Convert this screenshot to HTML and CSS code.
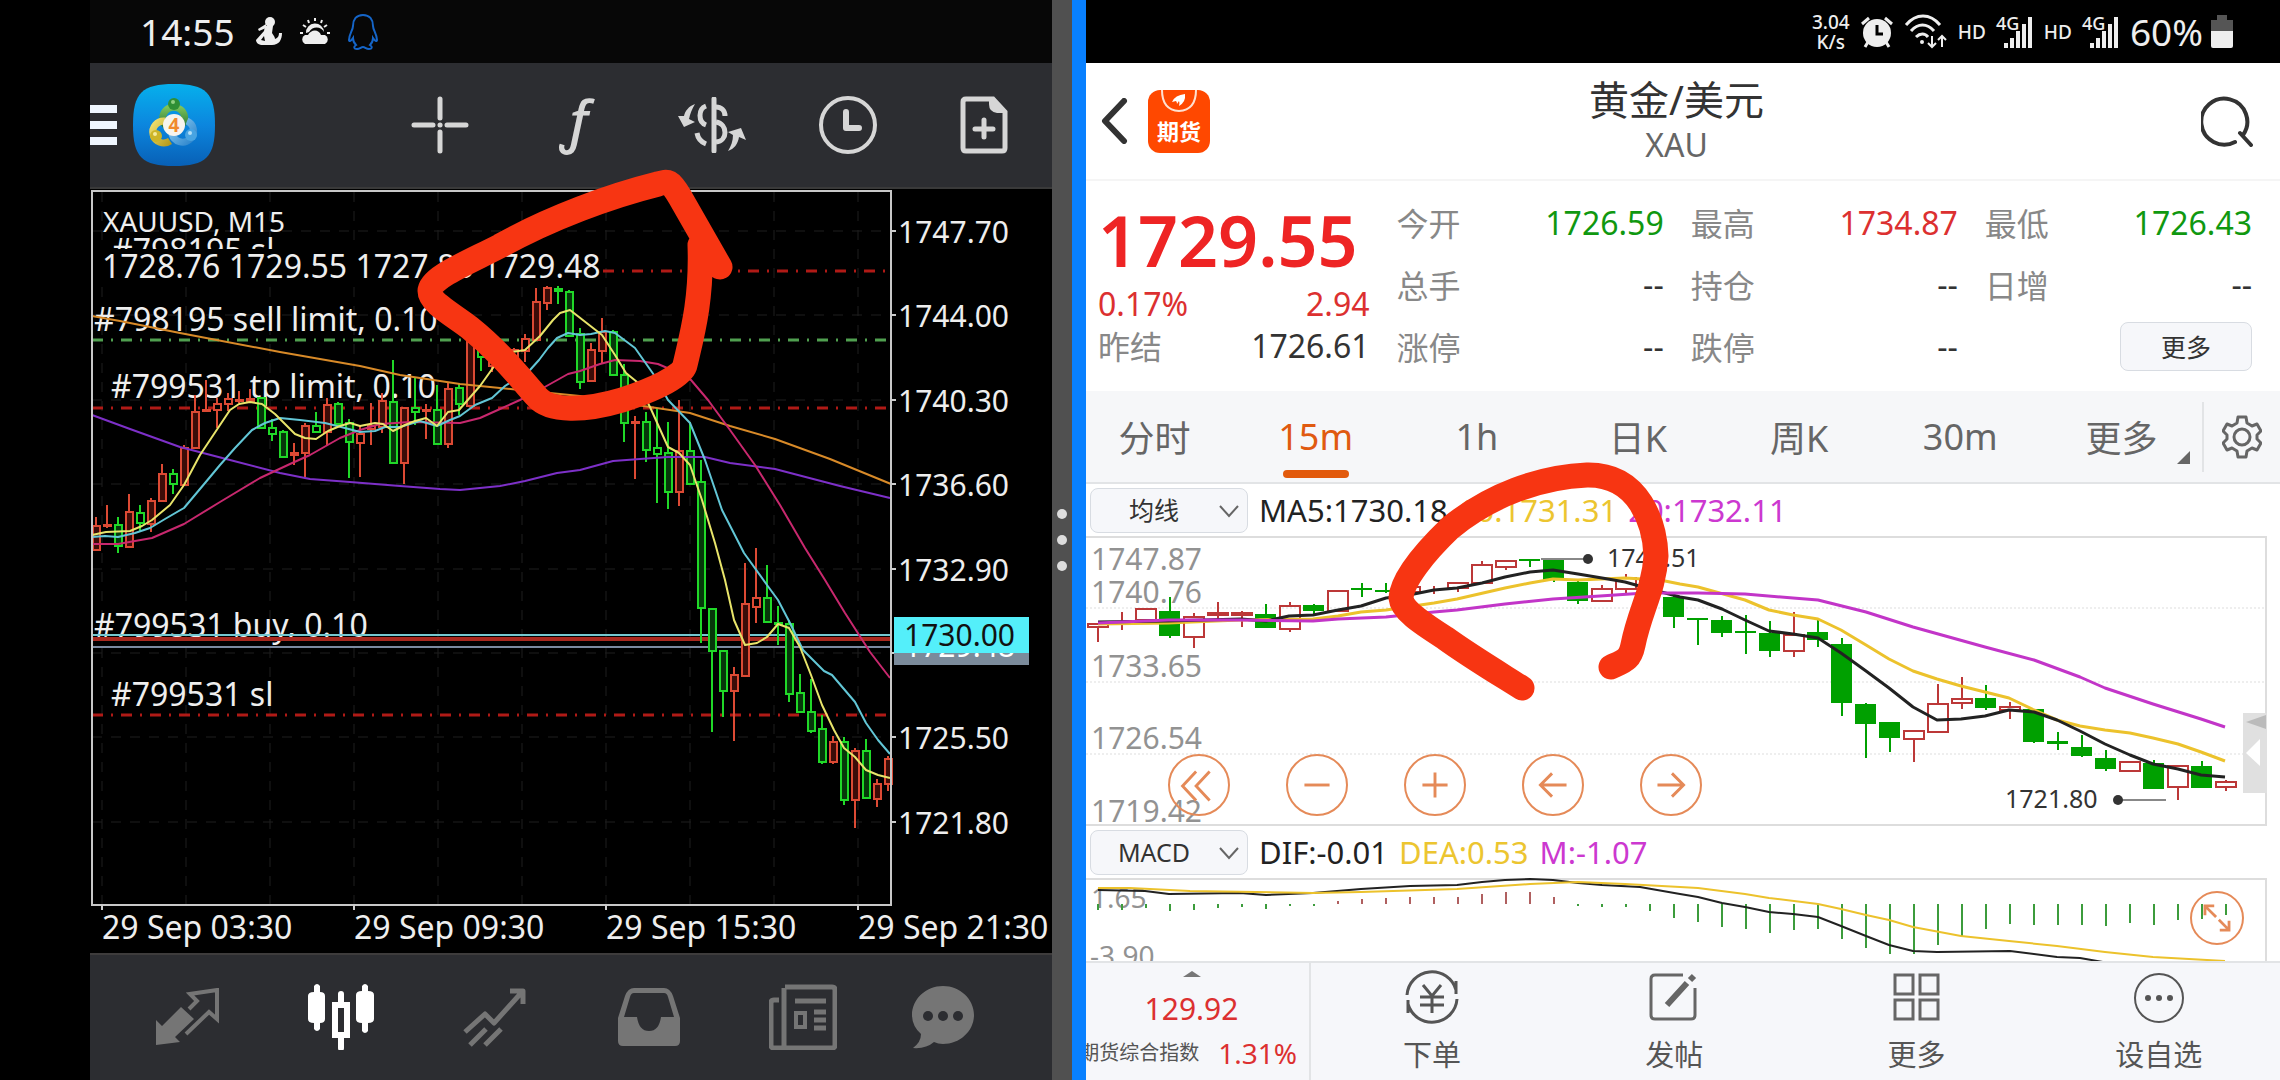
FILE: index.html
```html
<!DOCTYPE html>
<html lang="zh-CN">
<head>
  <meta charset="UTF-8" />
  <meta name="viewport" content="width=device-width, initial-scale=1.0" />
  <title>XAUUSD</title>
  <link rel="stylesheet" href="styles.css">
</head>
<body>
<div class="screen">

  <!-- MetaTrader -->
  <section class="pane mt">
    <div class="status status-left">
      <span class="clock">14:55</span>
      <svg width="28" height="32" viewBox="0 0 28 32" fill="#eee">
        <circle cx="15" cy="6" r="5"/>
        <path d="M11 8l-8 5 1 2 7-3z"/>
        <path d="M10 10h8l-1 7c2 3 3 4 3 6 3-1 4-3 4-6h3c0 7-3 12-10 12H8C4 29 1 27 1 24l8-9zM6 24l4 1-1-5z" fill-rule="evenodd"/>
      </svg>
      <svg width="32" height="32" viewBox="0 0 32 32">
        <path d="M16 2v3M9 4l1 3M23 4l-1 3M4 9l3 2M28 9l-3 2M1 17h3M28 17h3" stroke="#eee" stroke-width="2"/>
        <path d="M7 17a9 9 0 0 1 18-1c-2-5-11-7-15 0z" fill="#eee"/>
        <path d="M6 28a5 5 0 0 1 0-9h3c3-6 11-6 13 0h4a5 5 0 0 1 0 9z" fill="#eee"/>
      </svg>
      <svg width="32" height="36" viewBox="0 0 32 36" fill="none" stroke="#1565c8" stroke-width="2">
        <path d="M16 1C9 1 6 6 6 12c0 4-4 8-4 14 0 2 2 1 4-2 0 3 1 5 3 7-3 2-2 4 1 4 3 0 4-2 6-2s3 2 6 2c3 0 4-2 1-4 2-2 3-4 3-7 2 3 4 4 4 2 0-6-4-10-4-14 0-6-3-11-10-11z"/>
      </svg>
    </div>

    <header class="mt-bar">
      <button class="icon-btn menu-btn" aria-label="Menu">
        <svg width="27" height="40" viewBox="0 0 27 40" fill="#f0f7ff"><path d="M0 0h27v8H0zM0 16h27v8H0zM0 32h27v8H0z"/></svg>
      </button>
      <svg class="mt-logo" width="82" height="82" viewBox="0 0 82 82">
        <defs>
          <linearGradient id="sky" x1="0" y1="0" x2="0" y2="1"><stop offset="0" stop-color="#06b0ec"/><stop offset=".5" stop-color="#0c86de"/><stop offset="1" stop-color="#0860b6"/></linearGradient>
          <linearGradient id="leaf" x1="0" y1="0" x2="0" y2="1"><stop offset="0" stop-color="#7cc35a"/><stop offset="1" stop-color="#2c7c3a"/></linearGradient>
          <linearGradient id="gold" x1="0" y1="0" x2="1" y2="1"><stop offset="0" stop-color="#f0e070"/><stop offset="1" stop-color="#b89c1c"/></linearGradient>
          <linearGradient id="ice" x1="0" y1="0" x2="1" y2="1"><stop offset="0" stop-color="#8ccdf2"/><stop offset="1" stop-color="#2c84cc"/></linearGradient>
        </defs>
        <path d="M41 0c32 0 41 9 41 41s-9 41-41 41S0 73 0 41 9 0 41 0z" fill="url(#sky)"/>
        <path d="M33 42a11 11 0 1 1 17-2" fill="none" stroke="url(#leaf)" stroke-width="7"/>
        <path d="M32 37a11 11 0 1 0 5 20" fill="none" stroke="url(#gold)" stroke-width="7"/>
        <path d="M39 50a11 11 0 1 0 15-13" fill="none" stroke="url(#ice)" stroke-width="7"/>
        <circle cx="41" cy="20" r="6" fill="#2f8f35"/><circle cx="23" cy="52" r="6" fill="#cdb528"/><circle cx="58" cy="51" r="6" fill="#48a4e2"/>
        <circle cx="40" cy="18" r="2" fill="#8fd080"/><circle cx="22" cy="50" r="2" fill="#f4ea9c"/><circle cx="57" cy="49" r="2" fill="#b4e0f8"/>
        <circle cx="41" cy="41" r="11" fill="#f7f4ee"/>
        <text x="41" y="48" text-anchor="middle" class="logo-four">4</text>
      </svg>
      <nav class="mt-tools">
        <button class="icon-btn" aria-label="Crosshair">
          <svg width="58" height="58" viewBox="0 0 58 58" stroke="#d6d6d6" stroke-width="5" stroke-linecap="round"><path d="M29 3v19M29 36v19M3 29h19M36 29h19M29 29h.1"/></svg>
        </button>
        <button class="icon-btn fx" aria-label="Indicators">ƒ</button>
        <button class="icon-btn" aria-label="Trade">
          <svg width="70" height="56" viewBox="0 0 70 56" fill="none" stroke="#d6d6d6" stroke-width="5">
            <path d="M37 2v52" stroke-linecap="round"/>
            <path d="M39 10c5 0 9 3 9 9M39 25c12 2 12 19 0 20M29 9c-8 3-8 16 0 19M20 36c1 6 4 9 9 11"/>
            <path d="M18 7C12 9 8 14 7 19l-6 0 6 11 11-5-6-3c1-5 3-10 6-15zM51 54c6-2 10-7 11-14l7 3-5-12-13 4 5 3c0 6-2 11-5 16z" fill="#d6d6d6" stroke="none"/>
          </svg>
        </button>
        <button class="icon-btn" aria-label="Timeframe">
          <svg width="60" height="60" viewBox="0 0 60 60" fill="none" stroke="#d6d6d6" stroke-width="4"><circle cx="30" cy="30" r="27"/><path d="M28 17v16h13" stroke-width="6" stroke-linecap="round" stroke-linejoin="round"/></svg>
        </button>
        <button class="icon-btn" aria-label="New order">
          <svg width="48" height="58" viewBox="0 0 48 58" fill="none" stroke="#d6d6d6" stroke-width="5">
            <path d="M6 3h27l12 13v36q0 3-3 3H6q-3 0-3-3V6q0-3 3-3z"/><path d="M29 3h4l13 14h-9q-8-1-8-9z" fill="#d6d6d6" stroke="none"/><path d="M24 24v17M15 33h18" stroke-linecap="round"/>
          </svg>
        </button>
      </nav>
    </header>

    <svg class="mt-chart" viewBox="90 189 962 764">
      <g id="mtGrid" class="mt-grid"></g>
      <g class="orders">
        <path class="o-red" d="M603 271H891M92 408H891M92 715H891"/>
        <path class="o-green" d="M92 340H891"/>
      </g>
      <g class="mt-text">
        <text x="112" y="262">#798195 sl</text>
        <rect x="93" y="249" width="507" height="33" fill="#000"/>
        <text x="103" y="232" class="t-symbol">XAUUSD, M15</text>
        <text x="102" y="278">1728.76 1729.55 1727.83 1729.48</text>
        <text x="94" y="331">#798195 sell limit, 0.10</text>
        <text x="111" y="398">#799531 tp limit, 0.10</text>
        <text x="94" y="637">#799531 buy, 0.10</text>
        <text x="111" y="706">#799531 sl</text>
      </g>
      <path d="M92 639H891" stroke="#a8281e" stroke-width="4"/>
      <path d="M92 635H891" stroke="#74c8d0" stroke-width="2"/>
      <path d="M92 647H891" stroke="#7c8aa0" stroke-width="2"/>
      <g id="mtCandles"></g>
      <g id="mtLines" class="lines"></g>
      <path d="M92 191H891V905H92Z" fill="none" stroke="#c8c8c8" stroke-width="2"/>
      <g id="mtAxis" class="mt-axis"></g>
      <rect x="894" y="617" width="135" height="48" fill="#7b8b9b"/>
      <text x="904" y="657" class="t-bid">1729.48</text>
      <rect x="894" y="617" width="135" height="36" fill="#54effa"/>
      <text x="904" y="646" class="t-ask">1730.00</text>
    </svg>

    <nav class="mt-nav">
      <button class="icon-btn" aria-label="Quotes">
        <svg width="64" height="58" viewBox="0 0 64 58"><path d="M1 57V32l6 6 19-19 13 12-19 18 5 5z" fill="#757575"/><path d="M34 21l8-8-7-7 27-4v29l-8-7-23 22" fill="none" stroke="#757575" stroke-width="4"/></svg>
      </button>
      <button class="icon-btn" aria-label="Chart">
        <svg width="68" height="66" viewBox="0 0 68 66" fill="#fff"><path d="M7 2q3-4 6 0v6q5 0 5 4v23q0 4-5 4v6q-3 4-6 0v-6q-6 0-6-4V12q0-4 6-4zM55 2q3-4 6 0v5q6 0 6 4v24q0 4-6 4v8q-3 4-6 0v-8q-6 0-6-4V11q0-4 6-4z"/><path d="M28 21h12v30H28zM34 10v11M34 51v13" fill="none" stroke="#fff" stroke-width="6" stroke-linecap="round"/></svg>
      </button>
      <button class="icon-btn" aria-label="Trade">
        <svg width="64" height="60" viewBox="0 0 64 60" fill="none" stroke="#757575" stroke-width="5"><path d="M2 45l20-18 9 9L59 5M47 4h13v13M7 58l16-16M22 58l16-16" stroke-linejoin="round"/></svg>
      </button>
      <button class="icon-btn" aria-label="History">
        <svg width="64" height="60" viewBox="0 0 64 60"><path d="M17 1h30q6 0 9 8l7 22v23q0 5-5 5H6q-5 0-5-5V31L8 9q3-8 9-8zm0 5q-3 0-4 4L7 30h13q2 14 12 14t12-14h13L51 10q-1-4-4-4z" fill="#757575" fill-rule="evenodd"/></svg>
      </button>
      <button class="icon-btn" aria-label="News">
        <svg width="68" height="66" viewBox="0 0 68 66" fill="none" stroke="#757575" stroke-width="5"><path d="M16 3h47q3 0 3 3v55q0 3-3 3H5q-3 0-3-3V19q0-3 3-3h5M15 4v60"/><path d="M26 17h31M45 28h12M45 36h12M45 44h12"/><path d="M27 29h9v14h-9z" stroke-width="4"/></svg>
      </button>
      <button class="icon-btn" aria-label="Messages">
        <svg width="64" height="64" viewBox="0 0 64 64"><path d="M32 1c17 0 31 13 31 29S49 59 32 59q-5 0-9-2-8 7-21 6 8-6 8-14-9-8-9-19C1 14 15 1 32 1z" fill="#757575"/><g fill="#2c2d31"><circle cx="17" cy="31" r="5"/><circle cx="32" cy="31" r="5"/><circle cx="47" cy="31" r="5"/></g></svg>
      </button>
    </nav>
  </section>

  <div class="splitter"><i></i><i></i><i></i></div>

  <!-- Futures app -->
  <section class="pane fut">
    <div class="status status-right">
      <span class="speed">3.04<br>K/s</span>
      <svg width="34" height="34" viewBox="0 0 34 34"><g fill="none" stroke="#eee" stroke-width="3"><path d="M2 9l7-6M32 9l-7-6M8 27l-3 5M26 27l3 5"/></g><circle cx="17" cy="18" r="14" fill="#eee"/><path d="M17 10v9h6" fill="none" stroke="#000" stroke-width="3"/></svg>
      <svg width="44" height="36" viewBox="0 0 44 36" fill="none" stroke="#eee" stroke-width="3"><path d="M2 11C12-1 26-1 36 11M7 17c7-8 16-8 23 0M12 23c4-4 9-4 12 0"/><circle cx="18" cy="28" r="2" fill="#eee" stroke="none"/><path d="M28 22v11M24 29l4 4 4-4M38 33V22M34 26l4-4 4 4" stroke-width="2"/></svg>
      <span class="hd">HD</span>
      <svg class="signal" width="38" height="34" viewBox="0 0 38 34"><text x="0" y="15" class="net">4G</text><path d="M10 33v-5M16 33v-10M22 33V16M28 33V9M34 33V2" stroke="#eee" stroke-width="4"/></svg>
      <span class="hd">HD</span>
      <svg class="signal" width="38" height="34" viewBox="0 0 38 34"><text x="0" y="15" class="net">4G</text><path d="M10 33v-5M16 33v-10M22 33V16M28 33V9M34 33V2" stroke="#eee" stroke-width="4"/></svg>
      <span class="battery-text">60%</span>
      <svg class="battery" width="22" height="33" viewBox="0 0 22 33"><path d="M6 0h10v5h6v12H0V5h6z" fill="#555"/><path d="M0 16h22v15q0 2-2 2H2q-2 0-2-2z" fill="#eee"/></svg>
    </div>

    <header class="fut-head">
      <div class="head-left">
        <button class="icon-btn" aria-label="返回">
          <svg width="28" height="46" viewBox="0 0 28 46" fill="none" stroke="#333" stroke-width="6" stroke-linecap="round" stroke-linejoin="round"><path d="M24 3L5 23l19 20"/></svg>
        </button>
        <svg width="62" height="63" viewBox="0 0 62 63">
          <rect width="62" height="63" rx="12" fill="#ff4800"/>
          <path d="M14 0q0 20 17 21Q48 20 48 0" fill="none" stroke="#ffe0d0" stroke-width="2"/>
          <path d="M24 12q3-7 13-8 1 8-6 12 1-3 0-5l-2 3q0-2-1-3z" fill="#fff"/>
          <text x="31" y="50" text-anchor="middle" class="app-name">期货</text>
        </svg>
      </div>
      <div class="head-title">
        <h1>黄金/美元</h1>
        <p>XAU</p>
      </div>
      <button class="icon-btn head-search" aria-label="搜索">
        <svg width="52" height="52" viewBox="0 0 52 52" fill="none" stroke="#333" stroke-width="4" stroke-linecap="round"><path d="M34 47A23 23 0 1 1 42 40M39 38l11 12"/></svg>
      </button>
    </header>

    <div class="quote">
      <div class="quote-main">
        <div class="price">1729.55</div>
        <div class="pair change up"><span>0.17%</span><span>2.94</span></div>
        <div class="pair prev"><label>昨结</label><span>1726.61</span></div>
      </div>
      <div class="quote-col">
        <div class="pair"><label>今开</label><span class="down">1726.59</span></div>
        <div class="pair"><label>总手</label><span>--</span></div>
        <div class="pair"><label>涨停</label><span>--</span></div>
      </div>
      <div class="quote-col">
        <div class="pair"><label>最高</label><span class="up">1734.87</span></div>
        <div class="pair"><label>持仓</label><span>--</span></div>
        <div class="pair"><label>跌停</label><span>--</span></div>
      </div>
      <div class="quote-col">
        <div class="pair"><label>最低</label><span class="down">1726.43</span></div>
        <div class="pair"><label>日增</label><span>--</span></div>
        <div class="pair pair-end"><button class="more-btn">更多</button></div>
      </div>
    </div>

    <div class="tabs">
      <button class="tab">分时</button>
      <button class="tab active">15m</button>
      <button class="tab">1h</button>
      <button class="tab">日K</button>
      <button class="tab">周K</button>
      <button class="tab">30m</button>
      <button class="tab tab-more">更多</button>
      <button class="icon-btn gear" aria-label="设置">
        <svg width="40" height="44" viewBox="0 0 40 44" fill="none" stroke="#666" stroke-width="3" stroke-linejoin="round"><path d="M16 2h8l1 6 5 3 5-2 4 7-4 4v4l4 4-4 7-5-2-5 3-1 6h-8l-1-6-5-3-5 2-4-7 4-4v-4l-4-4 4-7 5 2 5-3z"/><circle cx="20" cy="22" r="8"/></svg>
      </button>
    </div>

    <div class="indicator">
      <span class="pick">
        <select aria-label="主图指标"><option>均线</option><option>BOLL</option></select>
        <svg width="22" height="14" viewBox="0 0 22 14" fill="none" stroke="#666" stroke-width="2"><path d="M2 2l9 10 9-10"/></svg>
      </span>
      <span class="v1">MA5:1730.18</span>
      <span class="v2">10:1731.31</span>
      <span class="v3">20:1732.11</span>
    </div>

    <div class="kline">
      <svg viewBox="1086 536 1194 290">
        <path d="M1086 608H2265M1086 682H2265M1086 754H2265" stroke="#ddd" stroke-width="1" stroke-dasharray="2 2"/>
        <path d="M1080 537H2266V825H1080" fill="none" stroke="#ddd" stroke-width="2"/>
        <g class="scale">
          <text x="1091" y="570">1747.87</text>
          <text x="1091" y="603">1740.76</text>
          <text x="1091" y="677">1733.65</text>
          <text x="1091" y="749">1726.54</text>
          <text x="1091" y="822">1719.42</text>
        </g>
        <g id="futCandles"></g>
        <g id="futLines" class="lines bold"></g>
        <g class="marks">
          <path d="M1541 559H1588M2118 800H2166" stroke="#888" stroke-width="2"/>
          <circle cx="1588" cy="559" r="5"/><circle cx="2118" cy="800" r="5"/>
          <text x="1607" y="567">1747.51</text>
          <text x="2005" y="808">1721.80</text>
        </g>
        <path d="M2243 713h24v80h-24z" fill="#e0e0e0"/>
        <path d="M2266 715v14l-20-7z" fill="#bbb"/>
        <path d="M2260 739v27l-14-13z" fill="#fff"/>
      </svg>
      <div class="zoom-btns">
        <button aria-label="最早"><svg viewBox="0 0 60 60"><path d="M27 16L13 31l14 15M41 16L27 31l14 15"/></svg></button>
        <button aria-label="缩小"><svg viewBox="0 0 60 60"><path d="M17 30h26"/></svg></button>
        <button aria-label="放大"><svg viewBox="0 0 60 60"><path d="M17 30h26M30 17v26"/></svg></button>
        <button aria-label="左移"><svg viewBox="0 0 60 60"><path d="M44 30H17M29 18L17 30l12 12"/></svg></button>
        <button aria-label="右移"><svg viewBox="0 0 60 60"><path d="M16 30h27M31 18l12 12-12 12"/></svg></button>
      </div>
    </div>

    <div class="indicator">
      <span class="pick">
        <select aria-label="副图指标"><option>MACD</option><option>KDJ</option></select>
        <svg width="22" height="14" viewBox="0 0 22 14" fill="none" stroke="#666" stroke-width="2"><path d="M2 2l9 10 9-10"/></svg>
      </span>
      <span class="v1">DIF:-0.01</span>
      <span class="v2">DEA:0.53</span>
      <span class="v3">M:-1.07</span>
    </div>

    <div class="macd">
      <svg viewBox="1086 879 1194 83">
        <path d="M1080 880H2266V970" fill="none" stroke="#ddd" stroke-width="2"/>
        <g class="scale small">
          <text x="1091" y="909">1.65</text>
          <text x="1090" y="967">-3.90</text>
        </g>
        <g id="macdBars"></g>
        <g id="macdLines" class="lines"></g>
      </svg>
      <button class="expand" aria-label="全屏"><svg viewBox="0 0 54 54"><path d="M14 24V14h10M15 15l11 11M40 30v10H30M39 39L29 29"/></svg></button>
    </div>

    <nav class="fut-nav">
      <a class="index" href="#">
        <i class="caret"></i>
        <strong>129.92</strong>
        <span class="index-row"><span>期货综合指数</span><b>1.31%</b></span>
      </a>
      <a class="nav-item" href="#">
        <svg width="54" height="54" viewBox="0 0 54 54" fill="none" stroke="#555" stroke-width="3"><path d="M2 25A25 25 0 0 1 51 20M52 29A25 25 0 0 1 3 34M51 11v13M3 43V30"/><path d="M18 15l9 11 9-11M15 27h24M15 35h24M27 26v17"/></svg>
        下单
      </a>
      <a class="nav-item" href="#">
        <svg width="54" height="54" viewBox="0 0 54 54" fill="none" stroke="#666" stroke-width="3"><path d="M36 5H8Q4 5 4 9v36q0 4 4 4h36q4 0 4-4V18"/><path d="M20 35l20-22M43 10l4-4" stroke-width="6"/></svg>
        发帖
      </a>
      <a class="nav-item" href="#">
        <svg width="54" height="54" viewBox="0 0 54 54" fill="none" stroke="#666" stroke-width="3"><path d="M5 5h18v19H5zM30 5h18v19H30zM5 30h18v19H5zM30 30h18v19H30z"/></svg>
        更多
      </a>
      <a class="nav-item" href="#">
        <svg width="54" height="54" viewBox="0 0 54 54" fill="none" stroke="#555" stroke-width="2"><circle cx="27" cy="28" r="24"/><g fill="#555" stroke="none"><circle cx="16" cy="28" r="3"/><circle cx="27" cy="28" r="3"/><circle cx="38" cy="28" r="3"/></g></svg>
        设自选
      </a>
    </nav>
  </section>

  <!-- Pen marks over both panes -->
  <svg class="pen" viewBox="0 0 2280 1080">
    <path d="M720 267L680 197C670 180 668 181 658 184C610 196 550 218 500 246C465 264 430 278 430 291C430 303 455 316 470 328C500 352 520 378 537 397C550 412 585 411 622 400C650 391 683 377 685 365C692 335 702 300 700 245"/>
    <path d="M1522 688C1495 671 1470 656 1445 638C1420 622 1402 610 1401 598C1402 580 1425 552 1450 528C1490 495 1540 477 1587 475C1640 474 1655 525 1656 556C1654 590 1640 610 1633 645C1630 660 1624 661 1611 667"/>
  </svg>
</div>
<script src="script.js"></script>
</body>
</html>
```
FILE: styles.css
```css
* {
  box-sizing: border-box;
}

body {
  margin: 0;
  background: #000;
  font-family: "Noto Sans", "Noto Sans CJK SC", sans-serif;
}

button {
  font-family: inherit;
  border: none;
  background: none;
  padding: 0;
  cursor: pointer;
}

h1, p {
  margin: 0;
  font-weight: 400;
}

svg {
  display: block;
}

.screen {
  position: relative;
  display: flex;
  min-height: 100vh;
  padding-left: 90px;
  overflow: hidden;
}

.pane {
  display: flex;
  flex-direction: column;
  min-width: 0;
}

.mt {
  flex: 962 1 0;
  color: #eee;
  background: #000;
}

.fut {
  flex: 1194 1 0;
  color: #333;
  background: #fff;
  overflow: hidden;
}

.icon-btn {
  display: flex;
  align-items: center;
  justify-content: center;
}

/* status bars */
.status {
  display: flex;
  align-items: center;
  height: 63px;
  color: #eee;
}

.status-left {
  gap: 16px;
  padding-left: 50px;
  background: #070707;
}

.clock {
  margin-right: 4px;
  font-size: 37px;
}

.status-right {
  justify-content: flex-end;
  gap: 10px;
  padding-right: 47px;
  background: #000;
}

.speed {
  font-size: 19px;
  font-weight: 500;
  line-height: 20px;
  text-align: center;
}

.hd {
  font-size: 19px;
  font-weight: 500;
}

.signal {
  overflow: visible;
}

.net {
  font-size: 18px;
  font-weight: 500;
  fill: #eee;
}

.battery-text {
  font-size: 37px;
}

.battery {
  margin-left: -2px;
}

/* MetaTrader toolbar */
.mt-bar {
  display: flex;
  align-items: center;
  height: 126px;
  background: #2c2d31;
  border-bottom: 2px solid #3a3a3a;
}

.mt-logo {
  margin-left: 16px;
}

.logo-four {
  font-size: 19px;
  font-weight: 700;
  fill: #f08a2c;
}

.mt-tools {
  flex: 1;
  display: grid;
  grid-template-columns: repeat(5, 1fr);
  margin-left: 157px;
}

.fx {
  padding-bottom: 12px;
  color: #d6d6d6;
  font-size: 56px;
  line-height: 48px;
  font-style: italic;
  font-weight: 500;
}

.mt-chart {
  width: 100%;
  height: auto;
}

.mt-grid path {
  stroke: #1e1e1e;
  stroke-width: 1;
  stroke-dasharray: 10 9;
}

.orders path {
  stroke-width: 3;
  stroke-dasharray: 11 8 2 8;
}

.o-red {
  stroke: #b01a16;
}

.o-green {
  stroke: #50a050;
}

.mt-text text {
  font-size: 32px;
  fill: #eee;
}

.mt-text .t-symbol {
  font-size: 28px;
}

.mt-axis text {
  font-size: 30px;
  fill: #eee;
}

.mt-axis .t-time {
  font-size: 32px;
}

.t-ask,
.t-bid {
  font-size: 30px;
  fill: #111;
}

.t-bid {
  fill: #fff;
}

.lines path {
  fill: none;
  stroke-width: 2;
  stroke-linejoin: round;
}

.lines.bold path {
  stroke-width: 3;
}

.mt-nav {
  flex: 1;
  display: grid;
  grid-template-columns: repeat(5, 11fr) 9fr;
  align-items: center;
  padding: 0 46px 8px 20px;
  background: #2c2d31;
  border-top: 2px solid #3e3c3c;
}

/* divider between the two apps */
.splitter {
  display: flex;
  flex-direction: column;
  align-items: center;
  justify-content: center;
  gap: 16px;
  width: 34px;
  padding-bottom: 6px;
  background: #505050;
  border-right: 14px solid #0880ff;
}

.splitter i {
  width: 10px;
  height: 10px;
  border-radius: 50%;
  background: #ddd;
}

/* futures header */
.fut-head {
  display: grid;
  grid-template-columns: 1fr auto 1fr;
  align-items: center;
  height: 118px;
  padding: 0 27px 0 14px;
  border-bottom: 2px solid #f5f5f5;
}

.head-left {
  display: flex;
  align-items: center;
  gap: 20px;
}

.head-title {
  text-align: center;
}

.head-title h1 {
  font-size: 40px;
  line-height: 48px;
}

.head-title p {
  color: #666;
  font-size: 32px;
  line-height: 42px;
}

.head-search {
  justify-self: end;
}

.app-name {
  font-size: 22px;
  font-weight: 700;
  fill: #fff;
}

/* quote table */
.quote {
  display: grid;
  grid-template-columns: repeat(4, 1fr);
  column-gap: 27px;
  padding: 10px 28px 14px 12px;
  font-size: 32px;
}

.pair {
  display: flex;
  justify-content: space-between;
  align-items: center;
  height: 62px;
}

.pair label {
  color: #888;
}

.pair-end {
  justify-content: flex-end;
}

.price {
  color: #ee2424;
  font-size: 70px;
  font-weight: 600;
  line-height: 98px;
  padding-right: 12px;
  text-align: center;
}

.change {
  height: 28px;
}

.prev {
  height: 56px;
}

.up {
  color: #dc3030;
}

.down {
  color: #109810;
}

.more-btn {
  width: 132px;
  height: 49px;
  color: #333;
  font-size: 25px;
  background: #f6f7fa;
  border: 1px solid #d8dce2;
  border-radius: 8px;
}

/* period tabs */
.tabs {
  display: flex;
  height: 93px;
  background: #f6f7f9;
  border-bottom: 2px solid #e2e4e6;
}

.tab {
  position: relative;
  flex: 1;
  color: #666;
  font-size: 36px;
}

.tab:first-child {
  margin-left: -12px;
}

.tab.active {
  color: #e05a10;
}

.tab.active::after {
  content: "";
  position: absolute;
  left: 50%;
  bottom: 4px;
  width: 66px;
  height: 8px;
  margin-left: -33px;
  border-radius: 4px;
  background: #e25a0c;
}

.tab-more::after {
  content: "";
  position: absolute;
  right: 12px;
  bottom: 18px;
  border-left: 13px solid transparent;
  border-bottom: 13px solid #666;
}

.gear {
  width: 78px;
  height: 70px;
  margin-top: 11px;
  border-left: 2px solid #e2e4e6;
}

/* indicator rows */
.indicator {
  display: flex;
  align-items: center;
  gap: 11px;
  height: 52px;
  padding-left: 4px;
  font-size: 31px;
}

.pick {
  position: relative;
}

.pick select {
  display: block;
  width: 158px;
  height: 45px;
  padding: 0 30px 0 0;
  color: #333;
  font: 25px "Noto Sans", "Noto Sans CJK SC", sans-serif;
  text-align-last: center;
  background: #f6f7fa;
  border: 1px solid #d8dce2;
  border-radius: 8px;
  appearance: none;
}

.pick svg {
  position: absolute;
  right: 8px;
  top: 16px;
  pointer-events: none;
}

.v1 {
  color: #222;
}

.v2 {
  color: #ecc530;
}

.v3 {
  color: #cc38d0;
}

/* k-line chart */
.kline,
.macd {
  position: relative;
}

.kline > svg,
.macd > svg {
  width: 100%;
  height: auto;
}

.scale text {
  font-size: 30px;
  fill: #929292;
}

.scale.small text {
  font-size: 28px;
}

.marks {
  font-size: 25px;
  fill: #333;
}

.zoom-btns {
  position: absolute;
  left: 82px;
  bottom: 10px;
  display: flex;
  gap: 56px;
}

.zoom-btns button,
.expand {
  width: 62px;
  height: 62px;
  border: 2px solid #e58a58;
  border-radius: 50%;
}

.zoom-btns path,
.expand path {
  fill: none;
  stroke: #e58a58;
  stroke-width: 3;
}

.expand {
  position: absolute;
  right: 36px;
  bottom: 16px;
  width: 54px;
  height: 54px;
}

/* bottom bar */
.fut-nav {
  flex: 1;
  display: flex;
  background: #f6f7fa;
  border-top: 2px solid #e2e4e6;
}

.fut-nav a {
  color: #555;
  text-decoration: none;
}

.index {
  display: flex;
  flex-direction: column;
  align-items: center;
  width: 225px;
  padding: 8px 12px 0 0;
  border-right: 2px solid #e2e4e6;
}

.caret {
  border: 9px solid transparent;
  border-top-width: 0;
  border-bottom: 6px solid #777;
}

.index strong {
  color: #dc3030;
  font-size: 30px;
  font-weight: 400;
  line-height: 42px;
  margin-top: 11px;
}

.index-row {
  align-self: flex-end;
  display: flex;
  align-items: center;
  gap: 19px;
  font-size: 20px;
  line-height: 46px;
  white-space: nowrap;
}

.index b {
  color: #dc3030;
  font-size: 28px;
  font-weight: 400;
}

.nav-item {
  flex: 1;
  display: flex;
  flex-direction: column;
  align-items: center;
  padding-top: 7px;
  font-size: 29px;
  line-height: 62px;
}

.pen {
  position: absolute;
  left: 0;
  top: 0;
  width: 100%;
  pointer-events: none;
}

.pen path {
  fill: none;
  stroke: #f73512;
  stroke-width: 25;
  stroke-linecap: round;
  stroke-linejoin: round;
}
```
FILE: script.js
```js
// candle: [colour, high, low, body top, body bottom]
const mtData = [
  ['r',517,550,526,550],['r',505,528,525,525],['g',517,553,525,546],['r',494,548,512,547],
  ['g',505,532,513,523],['r',498,532,501,524],['r',464,501,474,501],['g',469,494,474,484],
  ['r',445,485,448,485],['r',395,448,412,448],['r',380,412,410,410],['r',398,428,404,410],
  ['r',393,411,399,404],['r',391,403,400,401],['r',389,403,399,401],['g',397,428,398,428],
  ['g',419,441,428,434],['g',430,458,432,457],['r',443,465,453,455],['r',423,477,426,453],
  ['g',412,433,426,432],['r',398,446,405,432],['g',402,426,404,424],['g',419,478,423,442],
  ['r',425,477,434,443],['r',403,445,426,429],['r',393,433,401,427],['g',360,463,402,463],
  ['r',408,484,408,463],['g',377,425,408,412],['r',404,439,410,411],['g',385,445,410,444],
  ['r',382,448,389,444],['g',384,415,388,404],['r',340,407,342,406],['g',340,371,345,357],
  ['r',348,372,352,366],['r',350,375,356,366],['r',348,380,350,362],['r',334,362,339,351],
  ['r',288,341,302,340],['r',286,310,288,303],['g',286,304,289,291],['g',290,337,292,336],
  ['g',328,389,334,382],['r',343,381,350,381],['r',318,363,332,351],['g',330,375,332,375],
  ['g',364,442,375,423],['r',416,479,422,422],['g',412,462,422,450],['g',408,503,448,454],
  ['g',422,509,453,492],['r',400,506,451,492],['g',422,484,451,484],['g',460,643,482,608],
  ['g',608,732,609,651],['g',650,717,651,691],['r',667,741,675,691],['r',563,676,604,676],
  ['r',548,623,598,607],['g',565,623,598,622],['g',606,645,623,623],['g',620,702,624,694],
  ['g',674,713,693,712],['g',679,733,712,731],['g',715,764,729,762],['r',736,764,742,762],
  ['g',737,805,742,800],['r',748,828,751,800],['g',739,799,751,798],['r',779,807,784,799],
  ['r',756,791,759,784]
];

const mtLines = {
  '#d88a28': '92,316 120,321 180,333 280,352 360,366 400,375 460,384 530,391 580,396 650,407 690,413 730,426 775,439 830,459 891,484',
  '#7d30c8': '92,415 130,429 180,447 230,460 280,473 310,479 350,482 400,486 440,489 460,490 500,486 525,481 557,473 580,470 613,461 640,459 668,457 705,457 730,463 775,469 840,486 890,498',
  '#c8286e': '92,544 118,544 135,541 152,538 184,524 220,502 260,478 290,464 310,455 340,438 360,430 380,424 410,422 460,423 480,418 500,409 520,400 543,388 568,374 580,371 600,364 615,360 640,361 658,364 672,370 691,380 708,400 730,430 755,465 780,505 805,548 825,580 845,613 870,652 890,678',
  '#62c6d6': '92,537 105,536 118,537 135,533 150,528 165,519 184,508 205,483 220,465 235,448 252,430 265,423 280,418 300,420 325,423 345,428 360,432 375,431 385,427 400,427 420,421 437,426 450,420 460,416 475,405 492,398 505,386 530,370 539,360 548,348 557,338 568,333 580,335 591,334 605,331 615,333 635,348 654,375 668,400 690,423 705,460 722,510 744,553 767,585 778,600 790,623 803,650 824,671 832,675 855,702 866,723 878,740 890,754',
  '#e8e46a': '92,535 106,532 130,531 142,526 152,520 170,505 184,485 200,455 218,428 230,410 239,404 250,402 262,404 275,414 285,424 295,434 305,438 316,439 328,431 340,426 350,423 360,426 375,423 383,424 393,431 405,425 415,421 426,418 437,426 448,412 459,410 480,386 495,365 512,352 525,350 540,336 553,320 560,313 570,310 602,335 615,355 626,373 637,382 650,407 668,447 679,453 690,465 702,500 715,543 725,580 734,620 745,645 757,643 767,637 778,624 789,628 800,647 811,675 822,705 834,730 844,748 855,757 866,770 878,775 890,778'
};

const futData = [
  ['r',623,642,624,627],['r',612,630,625,625],['r',609,620,609,620],['g',597,638,611,636],
  ['r',613,648,617,637],['r',602,619,613,615],['r',611,627,613,615],['g',604,628,614,628],
  ['r',602,632,606,629],['g',604,616,605,611],['r',591,611,591,611],['g',583,597,588,590],
  ['g',583,593,590,592],['r',587,592,587,592],['r',586,594,587,587],['r',582,592,583,588],
  ['r',561,583,565,583],['r',560,570,561,567],['g',559,567,559,561],['g',559,582,560,580],
  ['g',580,604,582,601],['r',585,602,589,601],['r',574,595,578,589],['g',577,597,579,597],
  ['g',595,628,597,617],['g',619,645,618,620],['g',616,637,620,633],['g',615,654,631,633],
  ['g',621,657,633,651],['r',612,657,635,651],['g',619,647,632,640],['g',638,716,644,703],
  ['g',703,758,704,724],['g',722,752,722,738],['r',730,762,731,739],['r',684,732,704,732],
  ['r',677,709,699,703],['g',685,710,698,708],['r',702,719,707,710],['g',709,743,709,742],
  ['g',732,750,741,744],['g',735,757,747,756],['g',750,771,758,769],['r',761,771,762,771],
  ['g',760,789,763,789],['r',765,800,766,787],['g',761,788,766,788],['r',780,791,782,787]
];

const futLines = {
  '#ecc22c': '1098,624 1168,623 1240,620 1313,619 1338,616 1361,612 1386,610 1434,603 1457,599 1505,588 1530,583 1553,579 1578,580 1625,578 1660,580 1680,584 1698,587 1745,600 1769,610 1793,615 1818,619 1841,630 1866,645 1889,659 1913,671 1937,679 1961,686 1985,692 2009,698 2034,710 2057,720 2080,726 2105,730 2130,733 2153,738 2178,744 2201,752 2225,761',
  '#222': '1098,622 1168,621 1241,619 1266,621 1289,616 1313,615 1338,610 1361,606 1386,598 1409,595 1434,590 1457,588 1482,583 1505,577 1530,572 1553,570 1578,574 1608,579 1625,582 1643,587 1680,597 1698,600 1722,609 1745,620 1769,631 1793,634 1818,638 1841,653 1866,671 1889,688 1913,707 1937,720 1961,719 1985,716 2009,710 2034,712 2057,720 2080,731 2105,744 2130,755 2153,764 2178,769 2201,775 2225,777',
  '#c235c8': '1098,623 1168,620 1240,620 1313,621 1338,619 1386,617 1434,612 1457,610 1505,604 1553,599 1600,596 1645,593 1698,593 1745,594 1793,598 1818,600 1866,612 1913,627 1985,647 2034,660 2080,677 2105,688 2153,704 2201,719 2225,727'
};

const macdLines = {
  '#222': '1098,891 1145,892 1169,895 1240,894 1266,896 1313,894 1361,890 1410,887 1457,886 1482,883 1505,881 1530,880 1553,881 1578,884 1602,886 1640,888 1680,895 1698,898 1722,904 1745,908 1769,913 1793,915 1818,918 1841,927 1866,937 1889,946 1913,952 1937,953 2010,952 2057,958 2080,959 2120,966',
  '#ecc22c': '1098,889 1130,889 1190,892 1313,894 1361,893 1457,890 1530,885 1578,883 1625,885 1680,888 1698,889 1745,895 1769,899 1818,905 1841,910 1866,916 1889,921 1913,928 1961,937 2009,942 2057,947 2105,953 2153,958 2225,962'
};

// end of each histogram bar, all start on the zero line
const macdBars = [
  911,911,909,912,911,909,908,910,907,907,902,900,899,898,898,898,895,893,893,898,907,908,908,912,
  919,923,928,930,934,931,930,940,949,955,955,946,937,930,925,926,926,926,927,924,926,921,920,916
];

function put(id, html) {
  document.getElementById(id).innerHTML = html;
}

function polylines(set) {
  return Object.keys(set).map(c => `<path stroke="${c}" d="M${set[c].replace(/ /g, 'L')}"/>`).join('');
}

// dark chart: outlined bodies
put('mtCandles', mtData.map(([c, hi, lo, top, bot], i) => {
  const x = 96 + i * 11;
  const stroke = c === 'r' ? '#dc4a34' : '#20d828';
  const fill = bot - top < 14 ? '#000' : (c === 'r' ? '#3c0c08' : '#06380a');
  return `<g stroke="${stroke}" stroke-width="2"><path d="M${x} ${hi}V${lo}"/>` +
    `<rect x="${x - 3}" y="${top}" width="7" height="${Math.max(bot - top, 1)}" fill="${fill}"/></g>`;
}).join(''));

// light chart: hollow red, solid green
put('futCandles', futData.map(([c, hi, lo, top, bot], i) => {
  const x = 1098 + i * 24;
  if (c === 'g') {
    return `<path d="M${x} ${hi}V${lo}" stroke="#00a000" stroke-width="2"/>` +
      `<rect x="${x - 11}" y="${top}" width="21" height="${bot - top}" fill="#00a000"/>`;
  }
  return `<g stroke="#bc3838" stroke-width="2"><path d="M${x} ${hi}V${top}M${x} ${bot}V${lo}"/>` +
    `<rect x="${x - 10}" y="${top}" width="20" height="${bot - top}" fill="none"/></g>`;
}).join(''));

put('macdBars', macdBars.map((y, i) => {
  const x = 1098 + i * 24;
  return `<path d="M${x} 905V${y}" stroke="${y < 905 ? '#b06060' : '#3c9c3c'}" stroke-width="2"/>`;
}).join(''));

put('mtLines', polylines(mtLines));
put('futLines', polylines(futLines));
put('macdLines', polylines(macdLines));

// axis labels and grid
const prices = ['1747.70', '1744.00', '1740.30', '1736.60', '1732.90', '', '1725.50', '1721.80'];
const times = ['29 Sep 03:30', '29 Sep 09:30', '29 Sep 15:30', '29 Sep 21:30'];
let grid = '';
let axis = '';
prices.forEach((p, i) => {
  const y = Math.round(231 + i * 84.4);
  grid += `<path d="M92 ${y}H891"/>`;
  axis += `<path d="M891 ${y}h5" stroke="#ccc" stroke-width="2"/><text x="898" y="${y + 12}">${p}</text>`;
});
for (let x = 102; x < 891; x += 84) grid += `<path d="M${x} 192V905"/>`;
times.forEach((t, i) => {
  const x = 102 + i * 252;
  axis += `<path d="M${x} 905v5" stroke="#ccc" stroke-width="2"/><text class="t-time" x="${x}" y="939">${t}</text>`;
});
put('mtGrid', grid);
put('mtAxis', axis);
```
